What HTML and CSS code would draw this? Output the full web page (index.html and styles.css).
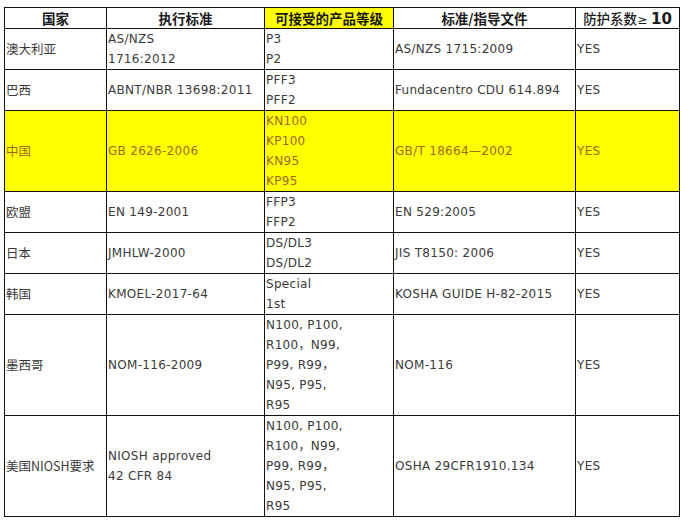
FILE: index.html
```html
<!DOCTYPE html>
<html lang="zh">
<head>
<meta charset="utf-8">
<title>防护标准</title>
<link rel="stylesheet" href="styles.css">
</head>
<body>
<table class="std">
  <colgroup>
    <col class="c1"><col class="c2"><col class="c3"><col class="c4"><col class="c5">
  </colgroup>
  <thead>
    <tr class="head">
      <th>国家</th>
      <th>执行标准</th>
      <th class="hl">可接受的产品等级</th>
      <th>标准/指导文件</th>
      <th class="pf"><span class="pf-t">防护系数</span><span class="pf-g">≥ </span><span class="pf-n">10</span></th>
    </tr>
  </thead>
  <tbody>
    <tr>
      <td>澳大利亚</td>
      <td>AS/NZS<br>1716:2012</td>
      <td>P3<br>P2</td>
      <td>AS/NZS 1715:2009</td>
      <td>YES</td>
    </tr>
    <tr>
      <td>巴西</td>
      <td>ABNT/NBR 13698:2011</td>
      <td>PFF3<br>PFF2</td>
      <td>Fundacentro CDU 614.894</td>
      <td>YES</td>
    </tr>
    <tr class="cn">
      <td>中国</td>
      <td>GB 2626-2006</td>
      <td>KN100<br>KP100<br>KN95<br>KP95</td>
      <td>GB/T 18664—2002</td>
      <td>YES</td>
    </tr>
    <tr>
      <td>欧盟</td>
      <td>EN 149-2001</td>
      <td>FFP3<br>FFP2</td>
      <td>EN 529:2005</td>
      <td>YES</td>
    </tr>
    <tr>
      <td>日本</td>
      <td>JMHLW-2000</td>
      <td>DS/DL3<br>DS/DL2</td>
      <td>JIS T8150: 2006</td>
      <td>YES</td>
    </tr>
    <tr>
      <td>韩国</td>
      <td>KMOEL-2017-64</td>
      <td>Special<br>1st</td>
      <td>KOSHA GUIDE H-82-2015</td>
      <td>YES</td>
    </tr>
    <tr>
      <td>墨西哥</td>
      <td>NOM-116-2009</td>
      <td>N100, P100,<br>R100，N99,<br>P99, R99，<br>N95, P95,<br>R95</td>
      <td>NOM-116</td>
      <td>YES</td>
    </tr>
    <tr>
      <td>美国NIOSH要求</td>
      <td>NIOSH approved<br>42 CFR 84</td>
      <td>N100, P100,<br>R100，N99,<br>P99, R99，<br>N95, P95,<br>R95</td>
      <td>OSHA 29CFR1910.134</td>
      <td>YES</td>
    </tr>
  </tbody>
</table>
</body>
</html>
```

FILE: styles.css
```css
html, body {
  margin: 0;
  padding: 0;
  background: #ffffff;
}
body {
  padding: 7px 0 0 4px;
  font-family: "DejaVu Sans", "Noto Sans CJK SC", sans-serif;
  font-size: 12px;
  letter-spacing: 0.3px;
  color: #3a3a3a;
}
.std {
  border-collapse: collapse;
  table-layout: fixed;
  width: 675px;
}
.c1 { width: 102px; }
.c2 { width: 158px; }
.c3 { width: 129px; }
.c4 { width: 182px; }
.c5 { width: 104px; }
.std th, .std td {
  border: 1px solid #111;
  padding: 0 1px;
  line-height: 20px;
  vertical-align: middle;
  text-align: left;
  white-space: nowrap;
  overflow: hidden;
}
.std td:first-child {
  font-family: "Noto Sans CJK SC", "DejaVu Sans", sans-serif;
  font-size: 12.5px;
  letter-spacing: 0;
}
.head th {
  height: 20px;
  padding: 0;
  text-align: center;
  font-family: "Noto Sans CJK SC", sans-serif;
  font-size: 13.5px;
  font-weight: 700;
  letter-spacing: 0;
  color: #1a1a1a;
  line-height: 20px;
}
.head th.hl {
  background: #ffff00;
}
.head th.pf span {
  line-height: 14px;
  vertical-align: baseline;
}
.head th.pf .pf-t {
  font-weight: 500;
}
.head th.pf .pf-g {
  font-family: "DejaVu Sans", sans-serif;
  font-size: 12px;
  font-weight: 400;
}
.head th.pf .pf-n {
  font-family: "DejaVu Sans", sans-serif;
  font-size: 15px;
  font-weight: 700;
}
.cn td {
  background: #ffff00;
  color: #9c6a22;
}
```
